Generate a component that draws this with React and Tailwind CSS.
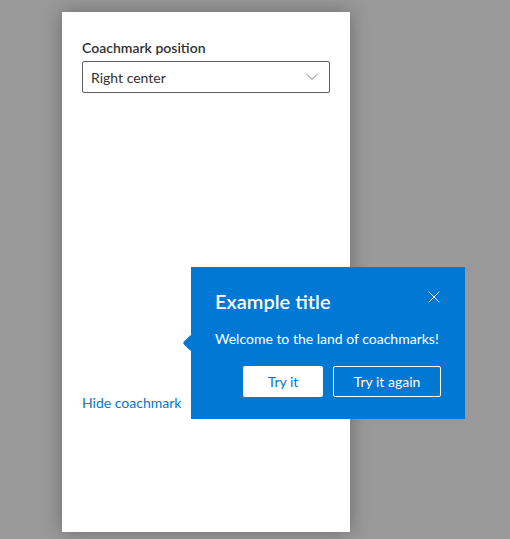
import React from "react";
import { ChevronDown, X } from "lucide-react";

const App = () => {
  return (
    <div className="relative min-h-[539px] w-full overflow-hidden bg-[#999999] font-['Lato','Segoe_UI',sans-serif] text-[#323130]">
      {/* Panel */}
      <div className="ml-[62px] mt-[12px] flex h-[520px] w-[288px] flex-col bg-white px-5 pt-[26px] shadow-[0_0_18px_rgba(0,0,0,0.3)]">
        <label className="text-[14px] font-semibold leading-[20px]">
          Coachmark position
        </label>
        <div className="mt-[3px] flex h-[32px] items-center justify-between rounded-[2px] border border-[#605e5c] pl-2 pr-[7px]">
          <span className="text-[14px]">Right center</span>
          <ChevronDown size={20} strokeWidth={1} className="text-[#605e5c]" />
        </div>
        <div className="h-[300px]" />
        <button className="self-start text-[14px] leading-[20px] text-[#0078d4]">
          Hide coachmark
        </button>
      </div>

      {/* Coachmark */}
      <div className="absolute left-[191px] top-[267px] h-[152px] w-[274px] bg-[#0078d4] px-6 pt-[20px] text-white">
        <div className="absolute left-[-6px] top-[70px] h-[12px] w-[12px] rotate-45 rounded-[2px] bg-[#0078d4]" />
        <div className="flex items-start justify-between">
          <h2 className="text-[20px] font-semibold leading-[28px]">Example title</h2>
          <button className="-mr-[3px] mt-[0px] text-white">
            <X size={20} strokeWidth={1.2} />
          </button>
        </div>
        <p className="mt-[14px] whitespace-nowrap text-[14px] leading-[20px]">
          Welcome to the land of coachmarks!
        </p>
        <div className="mt-[17px] flex justify-end gap-[10px]">
          <button className="h-[31px] w-[80px] rounded-[2px] bg-white text-[14px] text-[#0078d4]">
            Try it
          </button>
          <button className="h-[31px] w-[108px] rounded-[2px] border border-white text-[14px] text-white">
            Try it again
          </button>
        </div>
      </div>
    </div>
  );
};

export default App;
